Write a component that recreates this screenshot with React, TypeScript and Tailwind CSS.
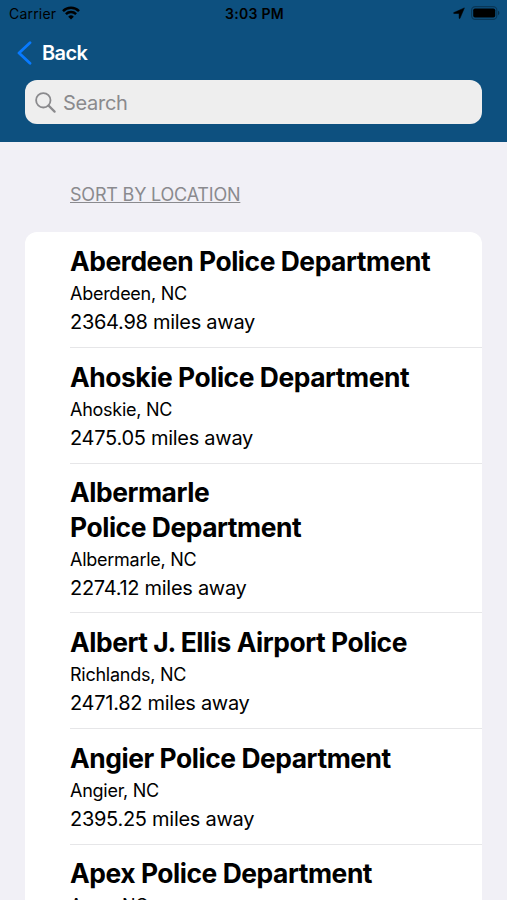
interface Department {
	name: string;
	city: string;
	miles: string;
}

const departments: Department[] = [
	{ name: "Aberdeen Police Department", city: "Aberdeen, NC", miles: "2364.98" },
	{ name: "Ahoskie Police Department", city: "Ahoskie, NC", miles: "2475.05" },
	{ name: "Albermarle\nPolice Department", city: "Albermarle, NC", miles: "2274.12" },
	{ name: "Albert J. Ellis Airport Police", city: "Richlands, NC", miles: "2471.82" },
	{ name: "Angier Police Department", city: "Angier, NC", miles: "2395.25" },
	{ name: "Apex Police Department", city: "Apex, NC", miles: "2391.47" },
];

function StatusBar() {
	return (
		<div className="grid grid-cols-3 items-center h-7 pl-[9px] pr-[7px] text-black">
			<div className="flex items-center gap-[6px] -mt-px">
				<span className="text-[14px] tracking-[0.2px]">Carrier</span>
				<svg className="-mt-[2px]" width="18" height="14" viewBox="0 0 18 14" fill="none" stroke="currentColor" strokeWidth="2.5">
					<path d="M1 5.1a11.4 11.4 0 0 1 16 0" />
					<path d="M3.9 8.1a7.3 7.3 0 0 1 10.2 0" />
					<path d="M9 13.6 6.2 10.7a4 4 0 0 1 5.6 0Z" fill="currentColor" stroke="none" />
				</svg>
			</div>
			<span className="text-center text-[14px] font-semibold tracking-[0.3px] -mt-px">3:03 PM</span>
			<div className="flex items-center justify-end gap-[6px] -mt-[2px]">
				<svg width="12" height="12" viewBox="0 0 12 12" fill="currentColor">
					<path d="M11.4.9 7.1 11.1a.5.5 0 0 1-1-.2V6.5H1.2a.5.5 0 0 1-.2-1Z" stroke="currentColor" strokeWidth="0.5" />
				</svg>
				<svg width="29" height="14" viewBox="0 0 29 14">
					<rect x="0.6" y="0.6" width="25.2" height="12.8" rx="3.6" fill="none" stroke="#000" strokeOpacity="0.3" strokeWidth="1.2" />
					<rect x="2.2" y="2.4" width="22" height="9.2" rx="1.8" fill="#000" />
					<path d="M27 4.8a2.4 2.4 0 0 1 0 4.4Z" fill="#000" fillOpacity="0.4" />
				</svg>
			</div>
		</div>
	);
}

function DepartmentRow({ department, last }: { department: Department; last: boolean }) {
	return (
		<div className={`ml-[45px] pt-[11.7px] pb-[10.9px] border-b ${last ? "border-transparent" : "border-[#e6e6e8]"}`}>
			<h2 className="text-[26.4px] leading-[34.3px] font-bold whitespace-pre-line tracking-[-0.44px]">{department.name}</h2>
			<p className="mt-[3.7px] text-[18px] leading-[24px] tracking-[-0.26px]">{department.city}</p>
			<p className="mt-[3px] text-[20px] leading-[27px] tracking-[-0.28px]">{department.miles} miles away</p>
		</div>
	);
}

export default function App() {
	return (
		<div className="h-screen overflow-hidden flex flex-col bg-[#f1f0f6] text-black font-['Inter','Liberation_Sans',sans-serif]">
			<header className="h-[142px] shrink-0 bg-[#0d507f]">
				<StatusBar />
				<button className="flex items-center gap-[10px] h-[49px] pl-[17px] text-white">
					<svg width="15" height="24" viewBox="0 0 15 24" fill="none" stroke="#087aff" strokeWidth="2.8" strokeLinecap="round" strokeLinejoin="round">
						<path d="M13 1.8 2 12l11 10.2" />
					</svg>
					<span className="text-[20px] leading-[26px] font-semibold tracking-[-0.6px] mt-px">Back</span>
				</button>
				<div className="flex items-center gap-[7px] h-[44px] mt-[3px] mx-[25px] pl-[10px] rounded-xl bg-[#eeeeee] text-[#8a8a8d]">
					<svg width="21" height="21" viewBox="0 0 21 21" fill="none" stroke="currentColor" strokeWidth="1.8" strokeLinecap="round">
						<circle cx="8.3" cy="8.3" r="7.2" />
						<path d="m13.6 13.6 6 6" strokeWidth="2.2" />
					</svg>
					<span className="text-[20px] leading-[26px] tracking-[-0.3px] mt-[2px]">Search</span>
				</div>
			</header>
			<main className="px-[25px]">
				<div className="h-[90.48px] pl-[45px] pt-[39.5px]">
					<span className="text-[18px] leading-[26px] tracking-[-0.2px] text-[#8a8a8e] underline">SORT BY LOCATION</span>
				</div>
				<div className="rounded-t-xl bg-white">
					{departments.map((department, index) => (
						<DepartmentRow key={department.name} department={department} last={index === departments.length - 1} />
					))}
				</div>
			</main>
		</div>
	);
}
